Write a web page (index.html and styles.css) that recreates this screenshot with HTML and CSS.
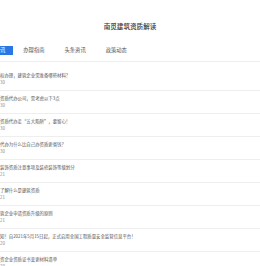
FILE: index.html
```html
<!DOCTYPE html>
<html>
<head>
    <title>南觅建筑资质解读</title>
    <link rel="stylesheet" href="styles.css">
</head>
<body>
    <div class="page">
        <div class="page-header">
            <h1 class="page-title">南觅建筑资质解读</h1>
        </div>
        <div class="tabs">
            <div class="tab active">讯</div>
            <div class="tab">办理指南</div>
            <div class="tab">头条资讯</div>
            <div class="tab">政策动态</div>
        </div>
        <ul class="news-list">
            <li class="news-item">
                <div class="news-title">权办理，建筑企业需准备哪些材料？</div>
                <div class="news-date">30</div>
            </li>
            <li class="news-item">
                <div class="news-title">资质代办公司，需考虑以下3点</div>
                <div class="news-date">30</div>
            </li>
            <li class="news-item">
                <div class="news-title">资质代办走“五大陷阱”，要留心！</div>
                <div class="news-date">30</div>
            </li>
            <li class="news-item">
                <div class="news-title">代办为什么比自己办资质更省钱？</div>
                <div class="news-date">30</div>
            </li>
            <li class="news-item">
                <div class="news-title">装饰资质注意事项及装修装饰等级划分</div>
                <div class="news-date">21</div>
            </li>
            <li class="news-item">
                <div class="news-title">了解什么是建筑资质</div>
                <div class="news-date">21</div>
            </li>
            <li class="news-item">
                <div class="news-title">筑企业申请资质升级的原则</div>
                <div class="news-date">21</div>
            </li>
            <li class="news-item">
                <div class="news-title">知！自2021年5月15日起，正式启用全国工程质量安全监管信息平台！</div>
                <div class="news-date">20</div>
            </li>
            <li class="news-item">
                <div class="news-title">资企业资质证书变更材料清单</div>
                <div class="news-date">20</div>
            </li>
        </ul>
    </div>
</body>
</html>
```

FILE: styles.css
```css
html, body {
    margin: 0;
    padding: 0;
    overflow: hidden;
    background: #fff;
}

body {
    font-family: "Noto Sans CJK SC", "Noto Sans", sans-serif;
    color: #333;
}

.page {
    width: 260px;
}

.page-header {
    padding-top: 22px;
    text-align: center;
}

.page-title {
    margin: 0;
    font-size: 6.6px;
    line-height: 8px;
    font-weight: 500;
    color: #333;
}

.tabs {
    display: flex;
    margin-top: 16px;
    padding-bottom: 6px;
    border-bottom: 1px solid #eee;
}

.tab {
    flex: none;
    padding: 0 10px;
    height: 9px;
    line-height: 9px;
    font-size: 5.3px;
    color: #555;
    white-space: nowrap;
}

.tab.active {
    padding: 0 8px 0 0;
    background: #2b76e5;
    color: #fff;
}

.news-list {
    list-style: none;
    margin: 0;
    padding: 6px 0 0;
}

.news-item {
    padding: 4px 0 4px;
    border-bottom: 1px solid #eee;
    white-space: nowrap;
}

.news-title,
.news-date {
    line-height: 7px;
}

.news-title {
    font-size: 4.4px;
    color: #555;
}

.news-date {
    font-size: 4.4px;
    color: #888;
}
```
